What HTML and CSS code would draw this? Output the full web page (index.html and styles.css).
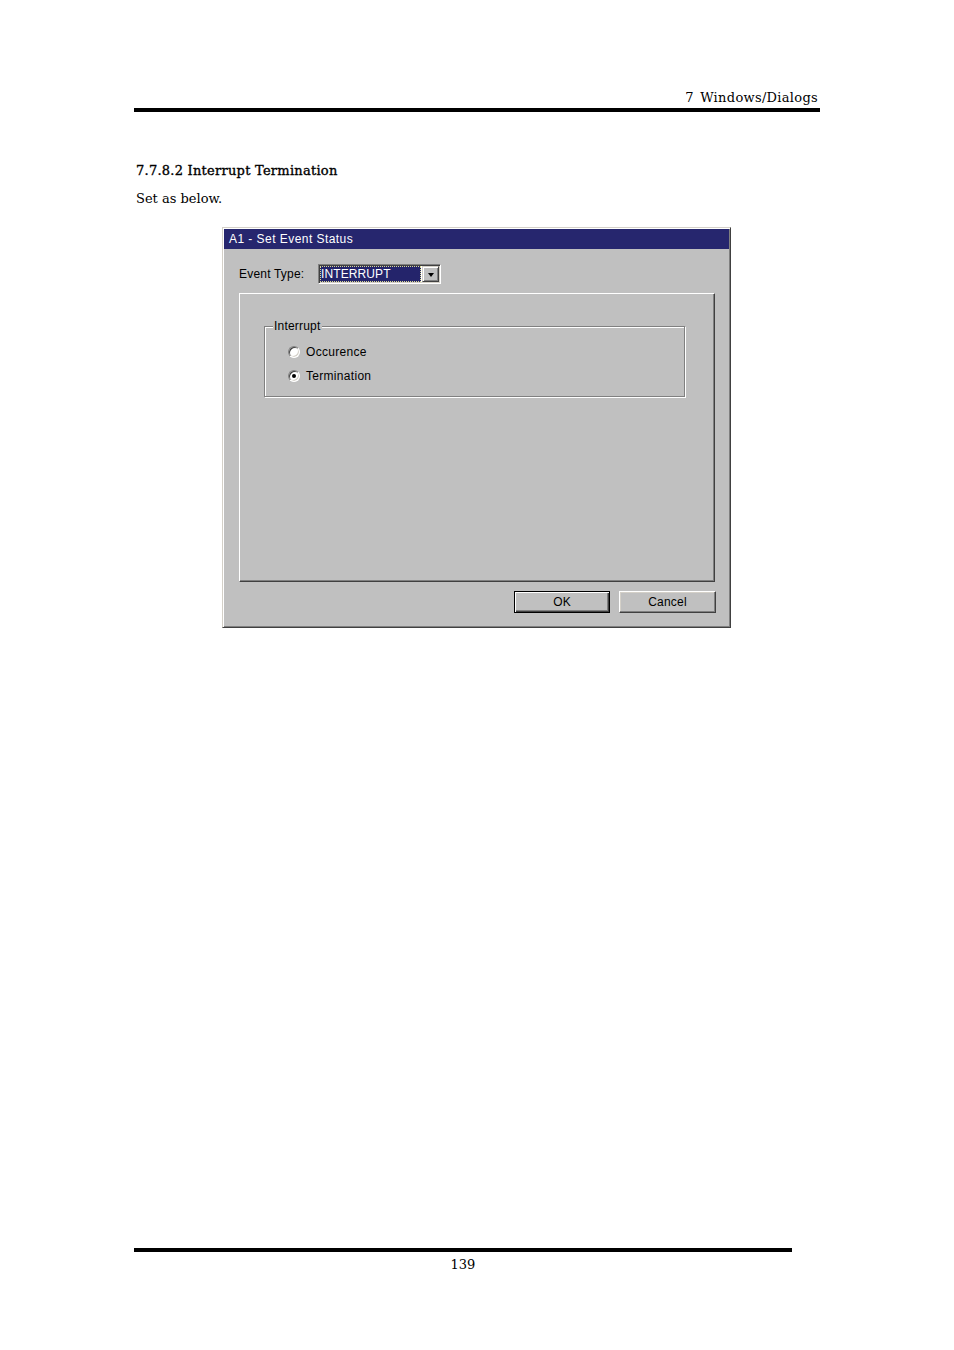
FILE: index.html
```html
<!DOCTYPE html>
<html>
<head>
<meta charset="utf-8">
<title>7.7.8.2 Interrupt Termination</title>
<link rel="stylesheet" href="styles.css">
</head>
<body>
<div class="page">
  <div class="running-head">7 Windows/Dialogs</div>
  <div class="rule"></div>

  <h3 class="heading">7.7.8.2 Interrupt Termination</h3>
  <p class="body-text">Set as below.</p>

  <div class="dialog">
    <div class="titlebar">A1 - Set Event Status</div>
    <div class="row">
      <span class="row-label">Event Type:</span>
      <div class="combo">
        <div class="combo-field"><span class="combo-sel">INTERRUPT</span></div>
        <div class="combo-btn"><span class="arrow"></span></div>
      </div>
    </div>
    <div class="panel">
      <div class="group">
        <span class="legend">Interrupt</span>
        <div class="radio-row"><span class="radio"></span><span class="radio-text">Occurence</span></div>
        <div class="radio-row"><span class="radio checked"></span><span class="radio-text">Termination</span></div>
      </div>
    </div>
    <div class="buttons">
      <div class="btn btn-default">OK</div>
      <div class="btn btn-cancel">Cancel</div>
    </div>
  </div>

  <div class="footer">
    <div class="rule footer-rule"></div>
    <div class="page-num">139</div>
  </div>
</div>
</body>
</html>
```
FILE: styles.css
```css
html, body {
  margin: 0;
  padding: 0;
  background: #fff;
}
.page {
  box-sizing: border-box;
  height: 1350px;
  padding: 90px 0 0 134px;
  display: flex;
  flex-direction: column;
  font-family: "DejaVu Serif", "Liberation Serif", serif;
  color: #000;
}
.running-head {
  width: 686px;
  box-sizing: border-box;
  padding-right: 2px;
  text-align: right;
  font-size: 13px;
  line-height: 16px;
  letter-spacing: 0.3px;
  word-spacing: 2px;
}
.rule {
  width: 686px;
  height: 4px;
  margin-top: 2px;
  background: #000;
}
.heading {
  margin: 51px 0 0 2px;
  font-size: 13px;
  line-height: 16px;
  font-weight: normal;
  letter-spacing: 0.25px;
  -webkit-text-stroke: 0.35px #000;
}
.body-text {
  margin: 12px 0 0 2px;
  font-size: 13px;
  line-height: 16px;
}

/* ---------- dialog ---------- */
.dialog {
  box-sizing: border-box;
  width: 509px;
  margin: 20px 0 0 88px;
  padding: 1px;
  background: #c0c0c0;
  border: 1px solid;
  border-color: #d4d0c8 #404040 #404040 #d4d0c8;
  box-shadow: inset 1px 1px 0 #fff, inset -1px -1px 0 #808080;
  font-family: "Liberation Sans", Arial, sans-serif;
  font-size: 12px;
  letter-spacing: 0.2px;
  color: #000;
}
.titlebar {
  height: 20px;
  line-height: 21px;
  padding-left: 5px;
  background: #26266e;
  color: #fff;
  letter-spacing: 0.45px;
}
.row {
  display: flex;
  align-items: center;
  height: 20px;
  margin-top: 15px;
  padding-left: 15px;
}
.row-label {
  width: 79px;
  flex: none;
}
.combo {
  box-sizing: border-box;
  width: 123px;
  height: 20px;
  padding: 1px;
  display: flex;
  background: #fff;
  border: 1px solid;
  border-color: #808080 #fff #fff #808080;
  box-shadow: inset 1px 1px 0 #404040, inset -1px -1px 0 #d4d0c8;
}
.combo-field {
  flex: 1;
  display: flex;
  padding-right: 1px;
}
.combo-sel {
  box-sizing: border-box;
  flex: 1;
  height: 16px;
  line-height: 14px;
  padding-left: 0;
  background: #24246b;
  color: #fff;
  letter-spacing: 0.1px;
  border: 1px dotted #d8d890;
}
.combo-btn {
  box-sizing: border-box;
  width: 17px;
  height: 16px;
  display: flex;
  align-items: center;
  justify-content: center;
  background: #c0c0c0;
  border: 1px solid;
  border-color: #d4d0c8 #404040 #404040 #d4d0c8;
  box-shadow: inset 1px 1px 0 #fff, inset -1px -1px 0 #808080;
}
.arrow {
  width: 0;
  height: 0;
  border-left: 3.5px solid transparent;
  border-right: 3.5px solid transparent;
  border-top: 4px solid #000;
  margin-top: 1px;
}
.panel {
  box-sizing: border-box;
  width: 476px;
  height: 289px;
  margin: 9px 0 0 15px;
  border: 1px solid;
  border-color: #fff #404040 #404040 #fff;
  box-shadow: inset -1px -1px 0 #808080;
  padding-top: 32px;
  padding-left: 24px;
}
.group {
  position: relative;
  box-sizing: border-box;
  width: 421px;
  height: 71px;
  border: 1px solid #808080;
  box-shadow: inset 1px 1px 0 #fff, 1px 1px 0 #fff;
  padding: 17px 0 0 23px;
  display: flex;
  flex-direction: column;
  gap: 8px;
}
.legend {
  position: absolute;
  top: -8px;
  left: 8px;
  padding: 0 1px;
  line-height: 14px;
  background: #c0c0c0;
}
.radio-row {
  display: flex;
  align-items: center;
  height: 16px;
  gap: 6px;
}
.radio-text {
  letter-spacing: 0.3px;
}
.radio {
  box-sizing: border-box;
  width: 12px;
  height: 12px;
  flex: none;
  border-radius: 50%;
  background: #fff;
  border: 1px solid;
  border-color: #808080 #fff #fff #808080;
  box-shadow: inset 1px 1px 0 #404040, inset -1px -1px 0 #d4d0c8;
  display: flex;
  align-items: center;
  justify-content: center;
}
.radio.checked::after {
  content: "";
  width: 4px;
  height: 4px;
  border-radius: 50%;
  background: #000;
}
.buttons {
  display: flex;
  justify-content: flex-end;
  gap: 9px;
  margin-top: 9px;
  padding: 0 13px 13px 0;
}
.btn {
  box-sizing: border-box;
  height: 22px;
  line-height: 20px;
  text-align: center;
  background: #c0c0c0;
}
.btn-default {
  width: 96px;
  border: 1px solid #000;
  box-shadow: inset 1px 1px 0 #fff, inset -1px -1px 0 #404040, inset -2px -2px 0 #808080;
}
.btn-cancel {
  width: 97px;
  border: 1px solid;
  border-color: #fff #404040 #404040 #fff;
  box-shadow: inset -1px -1px 0 #808080, inset 1px 1px 0 #d4d0c8;
}

/* ---------- footer ---------- */
.footer {
  margin-top: auto;
  margin-bottom: 78px;
  width: 658px;
}
.footer-rule {
  width: 658px;
  margin-top: 0;
}
.page-num {
  margin-top: 5px;
  text-align: center;
  font-size: 13px;
  line-height: 15px;
}
```
